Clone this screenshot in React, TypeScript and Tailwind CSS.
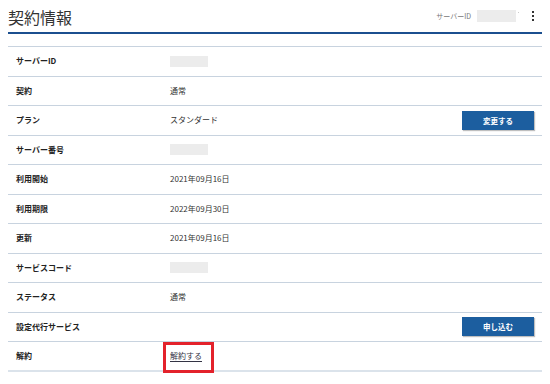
import React from "react";

interface Row {
  label: string;
  value?: string;
  blank?: boolean;
  button?: string;
  link?: string;
}

const rows: Row[] = [
  { label: "サーバーID", blank: true },
  { label: "契約", value: "通常" },
  { label: "プラン", value: "スタンダード", button: "変更する" },
  { label: "サーバー番号", blank: true },
  { label: "利用開始", value: "2021年09月16日" },
  { label: "利用期限", value: "2022年09月30日" },
  { label: "更新", value: "2021年09月16日" },
  { label: "サービスコード", blank: true },
  { label: "ステータス", value: "通常" },
  { label: "設定代行サービス", button: "申し込む" },
  { label: "解約", link: "解約する" },
];

export default function App() {
  return (
    <div
      className="w-[550px] h-[384px] bg-white overflow-hidden pl-2"
      style={{ fontFamily: '"Noto Sans CJK JP", "Noto Sans", sans-serif' }}
    >
      <div className="w-[534px]">
        <div className="flex items-center justify-between h-[34px] border-b-2 border-[#1b4f8f]">
          <h1 className="text-[16px] leading-none text-[#333] pt-[1px]">契約情報</h1>
          <div className="flex items-center">
            <span className="text-[7px] text-[#777] mr-[6px]">サーバーID</span>
            <span className="w-[39px] h-[12px] bg-[#ececec]"></span>
            <span className="w-[1px] h-[1px] bg-[#ccc] ml-[2px] mb-[8px]"></span>
            <span className="flex flex-col gap-[2px] ml-[13px] mr-[8px]">
              <span className="w-[2px] h-[2px] bg-[#333]"></span>
              <span className="w-[2px] h-[2px] bg-[#333]"></span>
              <span className="w-[2px] h-[2px] bg-[#333]"></span>
            </span>
          </div>
        </div>

        <div className="mt-[12px] border-t border-[#c8d3df]">
          {rows.map((row, i) => (
            <div
              key={row.label}
              className={`relative flex items-center h-[29.5px] ${
                i === rows.length - 1 ? "border-b-2 border-[#dbe3eb]" : "border-b border-[#c8d3df]"
              }`}
            >
              <div className="w-[162px] pl-[8px] text-[8px] font-bold text-[#222]">{row.label}</div>
              <div className="flex-1 text-[8px] text-[#333]">
                {row.blank && <div className="w-[38px] h-[11px] bg-[#ececec]"></div>}
                {row.value}
                {row.link && <span className="underline underline-offset-2 text-[#334]">{row.link}</span>}
              </div>
              {row.button && (
                <button className="w-[72px] h-[19px] bg-[#1c5e9f] text-white text-[7.5px] font-bold shadow-[1px_1px_1px_rgba(0,0,0,0.25)] mr-[8px]">
                  {row.button}
                </button>
              )}
              {row.link && (
                <div className="absolute left-[155px] top-0 w-[51px] h-[31px] border-[3px] border-[#e3222b]"></div>
              )}
            </div>
          ))}
        </div>
      </div>
    </div>
  );
}
